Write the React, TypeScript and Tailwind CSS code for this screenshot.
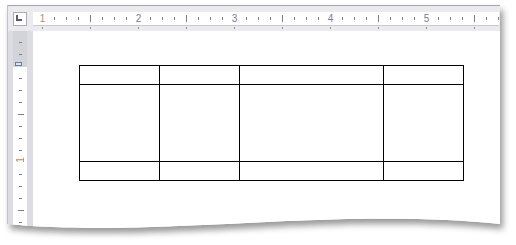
import React from "react";

const H_SMALL: number[] = [];
const H_LONG: number[] = [];
const H_NUM: { x: number; n: number }[] = [];
for (let i = 0; i <= 38; i++) {
  const x = 42 + i * 12;
  if (x > 498) break;
  if (i % 8 === 0) H_NUM.push({ x, n: i / 8 + 1 });
  else if (i % 4 === 0) H_LONG.push(x);
  else H_SMALL.push(x);
}
const H_UNDER: number[] = [];
for (let x = 42; x <= 498; x += 48) H_UNDER.push(x);

const V_SMALL = [42, 54, 78, 90, 102, 126, 138, 150, 174, 186, 198, 222];
const V_LONG = [114, 210];

function HRuler() {
  const ox = 33;
  return (
    <svg width={466} height={19} className="block">
      <rect x={0} y={0} width={466} height={13} fill="#ffffff" />
      <rect x={0} y={13} width={466} height={1} fill="#c9c9d1" />
      {H_SMALL.map((x) => (
        <rect key={"s" + x} x={x - ox} y={5} width={1} height={3} fill="#80808f" />
      ))}
      {H_LONG.map((x) => (
        <rect key={"l" + x} x={x - ox} y={3} width={1} height={7} fill="#80808f" />
      ))}
      {H_NUM.map((p) => (
        <text
          key={"n" + p.n}
          x={p.x - ox + 0.5}
          y={10}
          textAnchor="middle"
          fontSize={10}
          fontFamily="'Liberation Sans', Arial, sans-serif"
          fill={p.n === 1 ? "#b98a6a" : "#7a7a9c"}
        >
          {p.n}
        </text>
      ))}
      {H_UNDER.map((x) => (
        <rect key={"u" + x} x={x - ox} y={15} width={1} height={2} fill="#8a8a99" />
      ))}
    </svg>
  );
}

function VRuler() {
  const oy = 31;
  return (
    <svg width={14} height={200} className="block">
      <rect x={0} y={0} width={14} height={36} fill="#d3d3da" />
      <rect x={0} y={36} width={14} height={164} fill="#ffffff" />
      {V_SMALL.map((y) => (
        <rect key={"s" + y} x={6} y={y - oy} width={3} height={1} fill="#80808f" />
      ))}
      {V_LONG.map((y) => (
        <rect key={"l" + y} x={5} y={y - oy} width={6} height={1} fill="#80808f" />
      ))}
      <rect x={2.5} y={31.5} width={6} height={3} fill="#dbe6f5" stroke="#6f7a98" strokeWidth={1} />
      <text
        x={0}
        y={0}
        transform={`translate(7.5,${160 - oy}) rotate(-90)`}
        textAnchor="middle"
        dy={3.5}
        fontSize={10}
        fontFamily="'Liberation Sans', Arial, sans-serif"
        fill="#b98a6a"
      >
        1
      </text>
    </svg>
  );
}

export default function App() {
  return (
    <div className="w-[516px] h-[245px] bg-white overflow-hidden font-['Liberation_Sans',Arial,sans-serif]">
      <div className="pl-[7px] pt-[5px] [filter:drop-shadow(3px_5px_3px_rgba(0,0,0,0.4))]">
        <div className="w-[493px] h-[226px] bg-white flex flex-col border-l border-[#c2c2ca] [clip-path:path('M0_0H493V219C450_214_400_213_340_214C260_216_180_222_100_223C50_223_20_221_0_219Z')]">
          <div className="h-px bg-[#a4a4ad] shrink-0" />
          <div className="h-[25px] shrink-0 bg-[#ebebef] flex">
            <div className="w-[25px] shrink-0 pl-[5px] pt-[6px]">
              <div className="w-[14px] h-[14px] bg-white border border-[#acacb6] flex">
                <svg width={12} height={12} className="block">
                  <rect x={2} y={2} width={2} height={6} fill="#5c5c6c" />
                  <rect x={2} y={6} width={6} height={2} fill="#5c5c6c" />
                </svg>
              </div>
            </div>
            <div className="pt-[6px]">
              <HRuler />
            </div>
          </div>
          <div className="flex flex-1 min-h-0">
            <div className="w-[25px] shrink-0 bg-[#dcdce2] pl-[5px] flex">
              <div className="w-[14px] overflow-hidden">
                <VRuler />
              </div>
            </div>
            <div className="flex-1 bg-white pl-[46px] pt-[34px]">
              <div className="grid grid-cols-[79px_79px_143px_79px] grid-rows-[18px_76px_18px] gap-px p-px bg-black w-[385px]">
                <div className="bg-white" />
                <div className="bg-white" />
                <div className="bg-white" />
                <div className="bg-white" />
                <div className="bg-white" />
                <div className="bg-white" />
                <div className="bg-white" />
                <div className="bg-white" />
                <div className="bg-white" />
                <div className="bg-white" />
                <div className="bg-white" />
                <div className="bg-white" />
              </div>
            </div>
          </div>
        </div>
      </div>
    </div>
  );
}
